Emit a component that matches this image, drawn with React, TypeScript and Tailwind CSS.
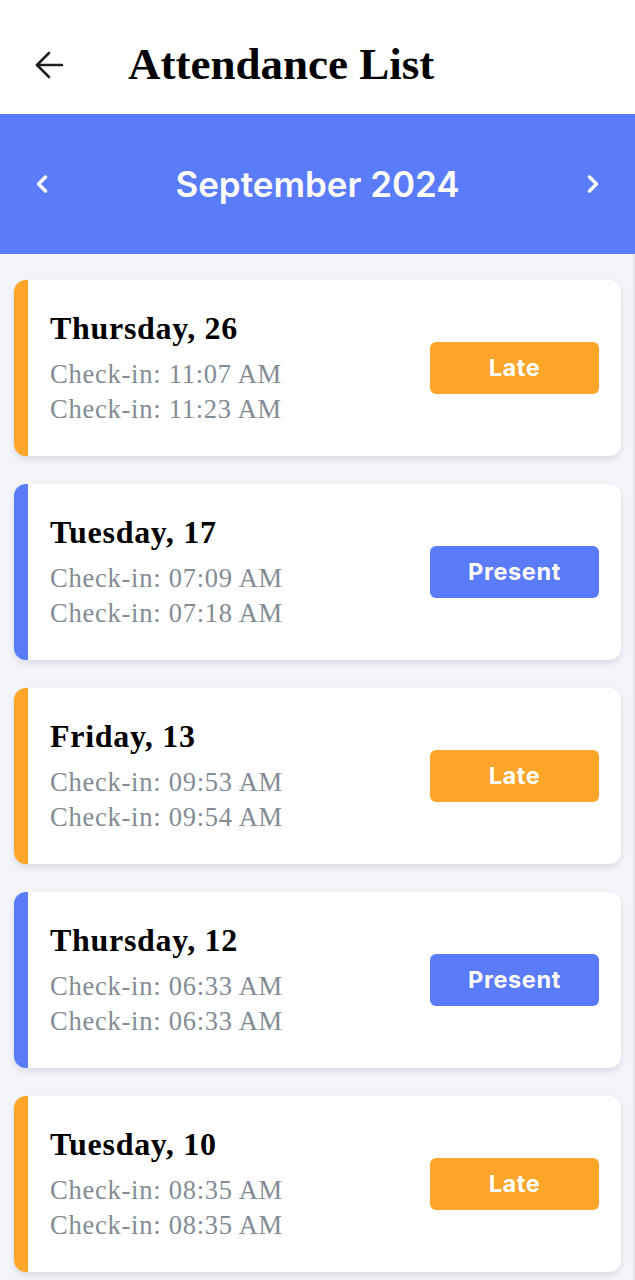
import { ChevronLeft, ChevronRight } from "lucide-react";

type Status = "Late" | "Present";

const RECORDS: { day: string; times: [string, string]; status: Status }[] = [
  { day: "Thursday, 26", times: ["11:07 AM", "11:23 AM"], status: "Late" },
  { day: "Tuesday, 17", times: ["07:09 AM", "07:18 AM"], status: "Present" },
  { day: "Friday, 13", times: ["09:53 AM", "09:54 AM"], status: "Late" },
  { day: "Thursday, 12", times: ["06:33 AM", "06:33 AM"], status: "Present" },
  { day: "Tuesday, 10", times: ["08:35 AM", "08:35 AM"], status: "Late" },
];

const serif = "font-['Liberation_Serif',serif]";
const sans = "font-['Inter',sans-serif]";

function BackArrow() {
  return (
    <svg width="30" height="30" viewBox="0 0 30 30" fill="none" stroke="#1f1f1f" strokeWidth="2.6" strokeLinecap="round" strokeLinejoin="round">
      <path d="M28 15H3" />
      <path d="M15 3L3 15L15 27" />
    </svg>
  );
}

function AttendanceCard({ day, times, status }: (typeof RECORDS)[number]) {
  const late = status === "Late";
  return (
    <div
      className={`flex h-[176px] items-center justify-between rounded-[12px] border-l-[14px] bg-white pl-[22px] pr-[22px] shadow-[0_3px_6px_rgba(20,30,60,0.12)] ${
        late ? "border-[#fda629]" : "border-[#5b7cfa]"
      }`}
    >
      <div className={serif}>
        <p className="text-[32px] font-bold leading-[36px] tracking-[0.7px] text-black">{day}</p>
        <p className="mt-[11px] text-[26.5px] leading-[35px] tracking-[0.75px] text-[#838b94]">
          Check-in: {times[0]}
        </p>
        <p className="text-[26.5px] leading-[35px] tracking-[0.75px] text-[#838b94]">
          Check-in: {times[1]}
        </p>
      </div>
      <div
        className={`flex h-[52px] w-[169px] items-center justify-center rounded-[6px] ${sans} text-[23.5px] font-bold tracking-[0.6px] text-white ${
          late ? "bg-[#fda629]" : "bg-[#5b7cfa]"
        }`}
      >
        {status}
      </div>
    </div>
  );
}

export default function App() {
  return (
    <div className="min-h-[1280px] w-[635px] overflow-hidden bg-[#f3f5fa] shadow-[inset_-2px_0_0_#e6e8ee]">
      {/* Top bar */}
      <div className="flex h-[114px] items-center bg-white pl-[34px] pt-[16px]">
        <BackArrow />
        <h1 className={`ml-[64px] ${serif} text-[45px] font-bold text-black`}>Attendance List</h1>
      </div>

      {/* Month switcher */}
      <div className="flex h-[140px] items-center justify-between bg-[#5b7cfa] px-[28px] text-white">
        <ChevronLeft size={28} strokeWidth={3} />
        <span className={`${sans} text-[35px] font-semibold`}>September 2024</span>
        <ChevronRight size={28} strokeWidth={3} />
      </div>

      {/* Records */}
      <div className="flex flex-col gap-[28px] px-[14px] pt-[26px]">
        {RECORDS.map((r) => (
          <AttendanceCard key={r.day} {...r} />
        ))}
      </div>
    </div>
  );
}
